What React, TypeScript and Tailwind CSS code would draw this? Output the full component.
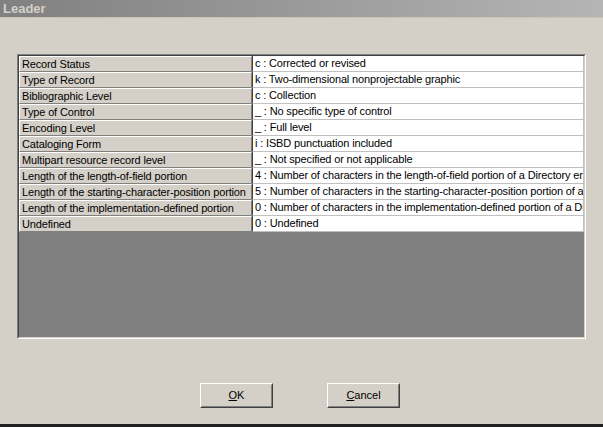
import React from "react"

const rows: [string, string][] = [
  ["Record Status", "c : Corrected or revised"],
  ["Type of Record", "k : Two-dimensional nonprojectable graphic"],
  ["Bibliographic Level", "c : Collection"],
  ["Type of Control", "_ : No specific type of control"],
  ["Encoding Level", "_ : Full level"],
  ["Cataloging Form", "i : ISBD punctuation included"],
  ["Multipart resource record level", "_ : Not specified or not applicable"],
  ["Length of the length-of-field portion", "4 : Number of characters in the length-of-field portion of a Directory er"],
  ["Length of the starting-character-position portion", "5 : Number of characters in the starting-character-position portion of a"],
  ["Length of the implementation-defined portion", "0 : Number of characters in the implementation-defined portion of a Di"],
  ["Undefined", "0 : Undefined"],
]

function WinButton({ children }: { children: React.ReactNode }) {
  return (
    <button className="w-[73px] h-[25px] bg-[#d4d0c8] border border-t-white border-l-white border-r-[#404040] border-b-[#404040] text-[11px] text-black">
      <span className="flex h-full items-center justify-center border border-transparent border-r-[#808080] border-b-[#808080]">
        {children}
      </span>
    </button>
  )
}

export default function App() {
  return (
    <div
      className="w-[603px] h-[427px] bg-[#d4d0c8] flex flex-col overflow-hidden"
      style={{ fontFamily: "Tahoma, 'Liberation Sans', Arial, sans-serif" }}
    >
      {/* title bar */}
      <div className="h-[18px] bg-gradient-to-r from-[#808080] to-[#b5b5b5] flex items-center pl-[3px] border-b border-[#c8c4bc]">
        <span className="text-[13px] font-bold text-[#d4d0c8] leading-none">Leader</span>
      </div>

      <div className="flex-1 flex flex-col">
        {/* grid */}
        <div className="mt-[36px] ml-[17px] w-[569px] h-[285px] border border-t-[#808080] border-l-[#808080] border-r-white border-b-white">
          <div className="h-full border border-t-[#404040] border-l-[#404040] border-r-[#d4d0c8] border-b-[#d4d0c8] bg-[#808080]">
            <div className="flex flex-col">
              {rows.map(([label, value]) => (
                <div key={label} className="flex h-[16px] text-[11px] leading-[14px] tracking-[-0.15px] text-black">
                  <div className="w-[233px] shrink-0 bg-[#d4d0c8] border border-t-white border-l-white border-r-[#808080] border-b-[#808080] pl-[2px] whitespace-nowrap overflow-hidden">
                    {label}
                  </div>
                  <div className="flex-1 min-w-0 bg-white border-b border-r border-[#c0c0c0] border-l border-l-[#404040] pl-[2px] whitespace-nowrap overflow-hidden leading-[15px]">
                    {value}
                  </div>
                </div>
              ))}
            </div>
          </div>
        </div>

        {/* buttons */}
        <div className="mt-[44px] flex gap-[54px] pl-[200px]">
          <WinButton>
            <span className="underline">O</span>K
          </WinButton>
          <WinButton>
            <span className="underline">C</span>ancel
          </WinButton>
        </div>
      </div>

      <div className="h-[3px] bg-[#202020]" />
    </div>
  )
}
